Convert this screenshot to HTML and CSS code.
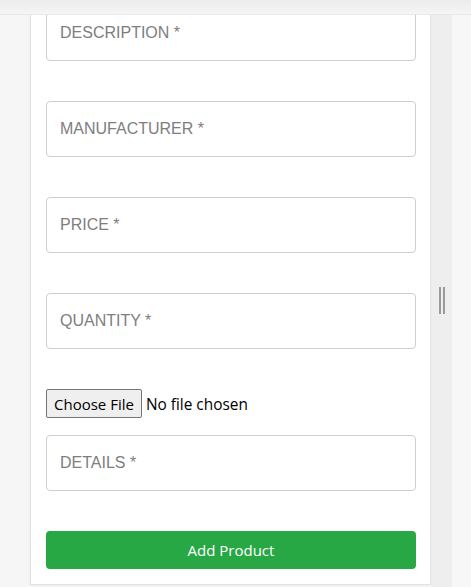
FILE: index.html
```html
<!DOCTYPE html>
<html lang="en">
<head>
<meta charset="utf-8">
<title>Add Product</title>
<link rel="stylesheet" href="styles.css">
</head>
<body>
<div class="topbar"></div>
<div class="page">
  <div class="gutter"></div>
  <form class="card">
    <input class="field" type="text" placeholder="DESCRIPTION *">
    <input class="field" type="text" placeholder="MANUFACTURER *">
    <input class="field" type="text" placeholder="PRICE *">
    <input class="field" type="text" placeholder="QUANTITY *">
    <input class="file" type="file">
    <input class="field details" type="text" placeholder="DETAILS *">
    <button class="submit" type="button">Add Product</button>
  </form>
  <div class="strip"><div class="grip"><span></span><span></span></div></div>
  <div class="rest"></div>
</div>
</body>
</html>
```

FILE: styles.css
```css
html, body {
  margin: 0;
  padding: 0;
}
body {
  background: #f6f6f6;
  font-family: "Liberation Sans", Arial, sans-serif;
}
.topbar {
  position: fixed;
  top: 0;
  left: 0;
  right: 0;
  height: 14px;
  background: linear-gradient(#ececec, #f5f5f5);
  border-bottom: 1px solid #e8e8e8;
  z-index: 5;
}
.page {
  display: flex;
  min-height: 587px;
}
.gutter {
  width: 30px;
  flex: none;
}
.card {
  width: 401px;
  box-sizing: border-box;
  flex: none;
  align-self: flex-start;
  background: #fff;
  border: 1px solid #e2e2e2;
  border-top: none;
  box-shadow: 0 1px 4px rgba(0, 0, 0, 0.04);
  padding: 5px 14px 15px 15px;
  display: flex;
  flex-direction: column;
}
.field {
  display: block;
  width: 370px;
  height: 56px;
  box-sizing: border-box;
  margin: 0 0 40px 0;
  padding: 0 13px;
  border: 1px solid #cfcfcf;
  border-radius: 4px;
  font-family: "Liberation Sans", Arial, sans-serif;
  font-size: 16px;
  color: #333;
  background: #fff;
  outline: none;
}
.field::placeholder {
  color: #7e7e7e;
}
.file {
  display: block;
  height: 29px;
  margin: 0 0 17px 0;
  padding: 0;
  font-family: "Open Sans", sans-serif;
  font-size: 15.4px;
  color: #000;
}
.file::file-selector-button {
  height: 29px;
  box-sizing: border-box;
  margin: 0 4px 0 0;
  padding: 0 7px;
  border: 1px solid #767676;
  border-radius: 2px;
  background: #efefef;
  font-family: "Open Sans", sans-serif;
  font-size: 15px;
  color: #000;
}
.submit {
  display: block;
  width: 370px;
  height: 38px;
  margin: 0;
  border: none;
  border-radius: 4px;
  background: #28a745;
  color: #fff;
  font-family: "Open Sans", sans-serif;
  font-size: 15px;
  cursor: pointer;
}
.strip {
  width: 21px;
  flex: none;
  background: #eeeeee;
  display: flex;
  justify-content: center;
  align-items: center;
}
.grip {
  display: flex;
  gap: 2px;
  margin-top: 14px;
}
.grip span {
  display: block;
  width: 2px;
  height: 27px;
  background: #9a9a9a;
}
.rest {
  flex: 1;
  background: #f7f7f7;
}
```
